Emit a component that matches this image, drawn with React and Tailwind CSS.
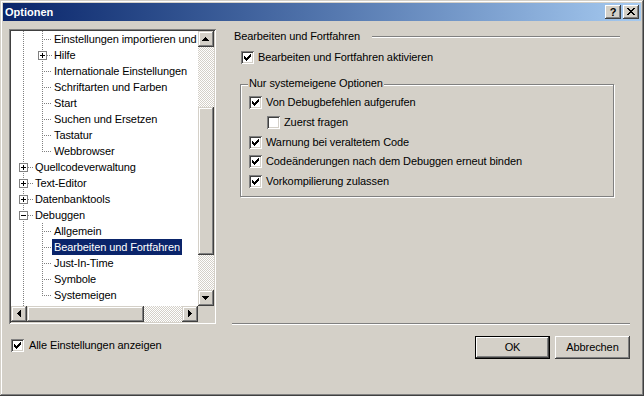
import React from "react";

const raisedScroll =
  "bg-[#d4d0c8] shadow-[inset_-1px_-1px_#404040,inset_1px_1px_#d4d0c8,inset_-2px_-2px_#808080,inset_2px_2px_#ffffff]";
const raisedPush =
  "bg-[#d4d0c8] shadow-[inset_-1px_-1px_#404040,inset_1px_1px_#ffffff,inset_-2px_-2px_#808080,inset_2px_2px_#d4d0c8]";
const checker =
  "bg-[repeating-conic-gradient(#d4d0c8_0%_25%,#ffffff_0%_50%)] bg-[length:2px_2px]";

const ARROWS = {
  up: "M7 6h1v1h-1z M6 7h3v1h-3z M5 8h5v1h-5z M4 9h7v1h-7z",
  down: "M4 6h7v1h-7z M5 7h5v1h-5z M6 8h3v1h-3z M7 9h1v1h-1z",
  right: "M6 4h1v7h-1z M7 5h1v5h-1z M8 6h1v3h-1z M9 7h1v1h-1z",
  left: "M6 7h1v1h-1z M7 6h1v3h-1z M8 5h1v5h-1z M9 4h1v7h-1z",
};

function ScrollBtn({ dir }) {
  return (
    <div className={"h-[16px] w-[16px] shrink-0 " + raisedScroll}>
      <svg width="16" height="16" shapeRendering="crispEdges">
        <path d={ARROWS[dir]} fill="#000" />
      </svg>
    </div>
  );
}

function Check({ checked }) {
  return (
    <span className="flex h-[13px] w-[13px] shrink-0 bg-white shadow-[inset_1px_1px_#808080,inset_-1px_-1px_#ffffff,inset_2px_2px_#404040,inset_-2px_-2px_#d4d0c8]">
      {checked && (
        <svg width="13" height="13" shapeRendering="crispEdges">
          <path
            d="M9 3h1v1h-1z M8 4h2v1h-2z M3 5h1v1h-1z M7 5h3v1h-3z M3 6h2v1h-2z M6 6h3v1h-3z M3 7h5v1h-5z M4 8h3v1h-3z M5 9h1v1h-1z"
            fill="#000"
          />
        </svg>
      )}
    </span>
  );
}

function Box({ x, open }) {
  return (
    <g>
      <rect x={x + 0.5} y={4.5} width={8} height={8} fill="#fff" stroke="#808080" />
      <rect x={x + 2} y={8} width={5} height={1} fill="#000" />
      {!open && <rect x={x + 4} y={6} width={1} height={5} fill="#000" />}
    </g>
  );
}

function TreeRow({ lvl, text, box, open, last, selected }) {
  const dot = { stroke: "#808080", strokeDasharray: "1 1", strokeWidth: 1 };
  return (
    <div className="flex h-[16px] items-center whitespace-nowrap">
      {lvl === 1 ? (
        <svg width="22" height="16" className="shrink-0" shapeRendering="crispEdges">
          <line x1="12.5" y1="0" x2="12.5" y2="16" {...dot} />
          {text && <line x1={box ? 17 : 13} y1="8.5" x2="22" y2="8.5" {...dot} />}
          {box && <Box x={8} open={open} />}
        </svg>
      ) : (
        <svg width="41" height="16" className="shrink-0" shapeRendering="crispEdges">
          <line x1="12.5" y1="0" x2="12.5" y2="16" {...dot} />
          <line x1="31.5" y1="0" x2="31.5" y2={last ? 9 : 16} {...dot} />
          <line x1={box ? 36 : 33} y1="8.5" x2="41" y2="8.5" {...dot} />
          {box && <Box x={27} open={open} />}
        </svg>
      )}
      {text && (
        <span
          className={
            selected
              ? "h-[16px] bg-[#0a246a] px-[2px] leading-[16px] text-white"
              : "h-[16px] px-[2px] leading-[16px] text-black"
          }
        >
          {text}
        </span>
      )}
    </div>
  );
}

const rows = [
  { lvl: 2, text: "Einstellungen importieren und exportieren" },
  { lvl: 2, text: "Hilfe", box: true },
  { lvl: 2, text: "Internationale Einstellungen" },
  { lvl: 2, text: "Schriftarten und Farben" },
  { lvl: 2, text: "Start" },
  { lvl: 2, text: "Suchen und Ersetzen" },
  { lvl: 2, text: "Tastatur" },
  { lvl: 2, text: "Webbrowser", last: true },
  { lvl: 1, text: "Quellcodeverwaltung", box: true },
  { lvl: 1, text: "Text-Editor", box: true },
  { lvl: 1, text: "Datenbanktools", box: true },
  { lvl: 1, text: "Debuggen", box: true, open: true },
  { lvl: 2, text: "Allgemein" },
  { lvl: 2, text: "Bearbeiten und Fortfahren", selected: true },
  { lvl: 2, text: "Just-In-Time" },
  { lvl: 2, text: "Symbole" },
  { lvl: 2, text: "Systemeigen", last: true },
  { lvl: 1, text: "" },
];

function CheckRow({ checked, label, className }) {
  return (
    <div className={"flex h-[13px] items-center " + (className || "")}>
      <Check checked={checked} />
      <span className="ml-[4px] whitespace-nowrap leading-[13px]">{label}</span>
    </div>
  );
}

export default function App() {
  return (
    <div className="flex h-[396px] w-[644px] flex-col bg-[#d4d0c8] p-[3px] font-['Liberation_Sans',Arial,sans-serif] text-[11px] tracking-[-0.1px] text-black shadow-[inset_-1px_-1px_#404040,inset_1px_1px_#d4d0c8,inset_-2px_-2px_#808080,inset_2px_2px_#ffffff]">
      {/* Title bar */}
      <div className="flex h-[18px] shrink-0 items-center justify-between bg-linear-to-r from-[#0a246a] to-[#a6caf0] pl-[2px] pr-[2px]">
        <span className="text-[11px] font-bold leading-[18px] tracking-normal text-white">Optionen</span>
        <div className="flex gap-[2px]">
          <div className={"flex h-[14px] w-[16px] items-center justify-center " + raisedPush}>
            <span className="text-[11px] font-bold leading-[14px] tracking-normal">?</span>
          </div>
          <div className={"h-[14px] w-[16px] " + raisedPush}>
            <svg width="16" height="14" shapeRendering="crispEdges">
              <path
                d="M4 3h2v1h-2z M10 3h2v1h-2z M5 4h2v1h-2z M9 4h2v1h-2z M6 5h4v1h-4z M7 6h2v1h-2z M6 7h4v1h-4z M5 8h2v1h-2z M9 8h2v1h-2z M4 9h2v1h-2z M10 9h2v1h-2z"
                fill="#000"
              />
            </svg>
          </div>
        </div>
      </div>

      {/* Body */}
      <div className="flex flex-1 flex-col pl-[6px] pr-[11px] pt-[8px]">
        <div className="flex gap-[16px]">
          {/* Tree */}
          <div className="flex h-[295px] w-[207px] shrink-0 flex-col p-[2px] shadow-[inset_1px_1px_#808080,inset_-1px_-1px_#ffffff,inset_2px_2px_#404040,inset_-2px_-2px_#d4d0c8]">
            <div className="flex h-[275px]">
              <div className="h-[275px] w-[187px] overflow-hidden bg-white">
                {rows.map((r, i) => (
                  <TreeRow key={i} {...r} />
                ))}
              </div>
              <div className="flex w-[16px] flex-col">
                <ScrollBtn dir="up" />
                <div className={"h-[60px] " + checker} />
                <div className={"h-[148px] " + raisedScroll} />
                <div className={"flex-1 " + checker} />
                <ScrollBtn dir="down" />
              </div>
            </div>
            <div className="flex h-[16px]">
              <div className="flex w-[187px]">
                <ScrollBtn dir="left" />
                <div className={"w-[117px] " + raisedScroll} />
                <div className={"flex-1 " + checker} />
                <ScrollBtn dir="right" />
              </div>
              <div className="h-[16px] w-[16px] bg-[#d4d0c8]" />
            </div>
          </div>

          {/* Right panel */}
          <div className="flex h-[296px] w-[398px] flex-col">
            <div className="flex h-[14px] items-center pl-[2px] pr-[10px]">
              <span className="whitespace-nowrap leading-[14px]">Bearbeiten und Fortfahren</span>
              <div className="ml-[12px] mt-[2px] h-[2px] flex-1 border-t border-b border-t-[#808080] border-b-white" />
            </div>
            <CheckRow checked label="Bearbeiten und Fortfahren aktivieren" className="ml-[9px] mt-[8px]" />

            <div className="relative ml-[8px] mt-[20px] w-[374px] border border-[#808080] pb-[8px] pl-[8px] pt-[11px] shadow-[1px_1px_#ffffff,inset_1px_1px_#ffffff]">
              <span className="absolute left-[7px] top-[-8px] bg-[#d4d0c8] px-[1px] leading-[13px]">
                Nur systemeigene Optionen
              </span>
              <div className="h-[20px]">
                <CheckRow checked label="Von Debugbefehlen aufgerufen" />
              </div>
              <div className="h-[20px]">
                <CheckRow label="Zuerst fragen" className="ml-[18px]" />
              </div>
              <div className="h-[19px]">
                <CheckRow checked label="Warnung bei veraltetem Code" />
              </div>
              <div className="h-[20px]">
                <CheckRow checked label="Codeänderungen nach dem Debuggen erneut binden" />
              </div>
              <CheckRow checked label="Vorkompilierung zulassen" />
            </div>

            <div className="mt-auto h-[2px] border-t border-b border-t-[#808080] border-b-white" />
          </div>
        </div>

        {/* Bottom row */}
        <div className="mt-[11px] flex items-start justify-between">
          <div className="ml-[2px] mt-[3px] flex h-[13px] items-center">
            <Check checked />
            <span className="ml-[5px] whitespace-nowrap leading-[13px]">Alle Einstellungen anzeigen</span>
          </div>
          <div className="flex gap-[5px]">
            <button className="flex h-[23px] w-[75px] items-center justify-center border border-black bg-[#d4d0c8] shadow-[inset_-1px_-1px_#404040,inset_1px_1px_#ffffff,inset_-2px_-2px_#808080]">
              OK
            </button>
            <button className={"flex h-[23px] w-[75px] items-center justify-center " + raisedPush}>
              Abbrechen
            </button>
          </div>
        </div>
      </div>
    </div>
  );
}
